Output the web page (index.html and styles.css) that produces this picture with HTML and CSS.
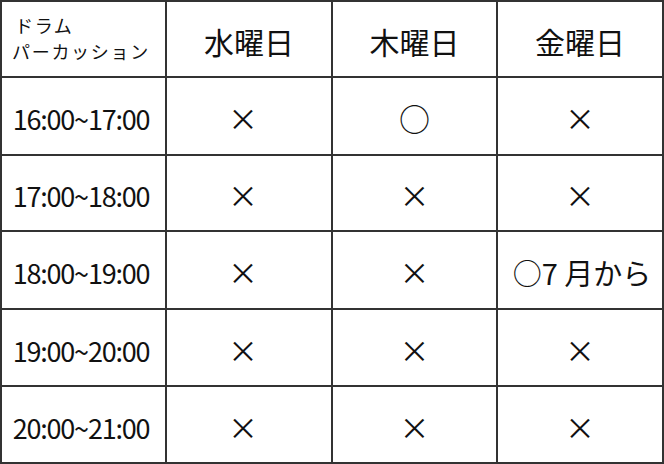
FILE: index.html
```html
<!DOCTYPE html>
<html lang="ja">
<head>
<meta charset="utf-8">
<title>ドラム パーカッション</title>
<link rel="stylesheet" href="styles.css">
</head>
<body>
<div class="schedule">
  <div class="cell corner"><p class="corner-label">ドラム<br>パーカッション</p></div>
  <div class="cell day">水曜日</div>
  <div class="cell day">木曜日</div>
  <div class="cell day">金曜日</div>

  <div class="cell time">16:00~17:00</div>
  <div class="cell mark first">×</div>
  <div class="cell mark circle">○</div>
  <div class="cell mark">×</div>

  <div class="cell time">17:00~18:00</div>
  <div class="cell mark first">×</div>
  <div class="cell mark">×</div>
  <div class="cell mark">×</div>

  <div class="cell time">18:00~19:00</div>
  <div class="cell mark first">×</div>
  <div class="cell mark">×</div>
  <div class="cell note">○7 月から</div>

  <div class="cell time">19:00~20:00</div>
  <div class="cell mark first">×</div>
  <div class="cell mark">×</div>
  <div class="cell mark">×</div>

  <div class="cell time">20:00~21:00</div>
  <div class="cell mark first">×</div>
  <div class="cell mark">×</div>
  <div class="cell mark">×</div>
</div>
</body>
</html>
```

FILE: styles.css
```css
html, body {
  margin: 0;
  padding: 0;
  background: #fff;
}

.schedule {
  width: 664px;
  height: 464px;
  box-sizing: border-box;
  padding: 2px;
  background: #333;
  display: grid;
  grid-template-columns: 163px 164px 163px 164px;
  grid-template-rows: 74px 76px 74px 76px 75px 75px;
  gap: 2px;
  font-family: "Noto Sans CJK JP", "Noto Sans", sans-serif;
  color: #111;
}

.cell {
  background: #fff;
  display: flex;
  align-items: center;
  justify-content: center;
  line-height: 1;
}

.corner {
  justify-content: flex-start;
  padding-left: 10px;
  padding-bottom: 3px;
}

.corner-label {
  margin: 0;
  font-size: 18px;
  letter-spacing: 1.7px;
  line-height: 26px;
  text-indent: 3px;
}

.day {
  font-size: 30px;
  padding-top: 3px;
}

.time {
  font-size: 27px;
  letter-spacing: -1.2px;
  padding-top: 5px;
  padding-right: 5px;
}

.mark {
  font-size: 30px;
  padding-top: 2px;
}

.mark.first {
  padding-right: 12px;
}

.circle {
  font-size: 31px;
}

.note {
  font-size: 29px;
  padding-top: 4px;
  padding-left: 4px;
  white-space: nowrap;
}
```
